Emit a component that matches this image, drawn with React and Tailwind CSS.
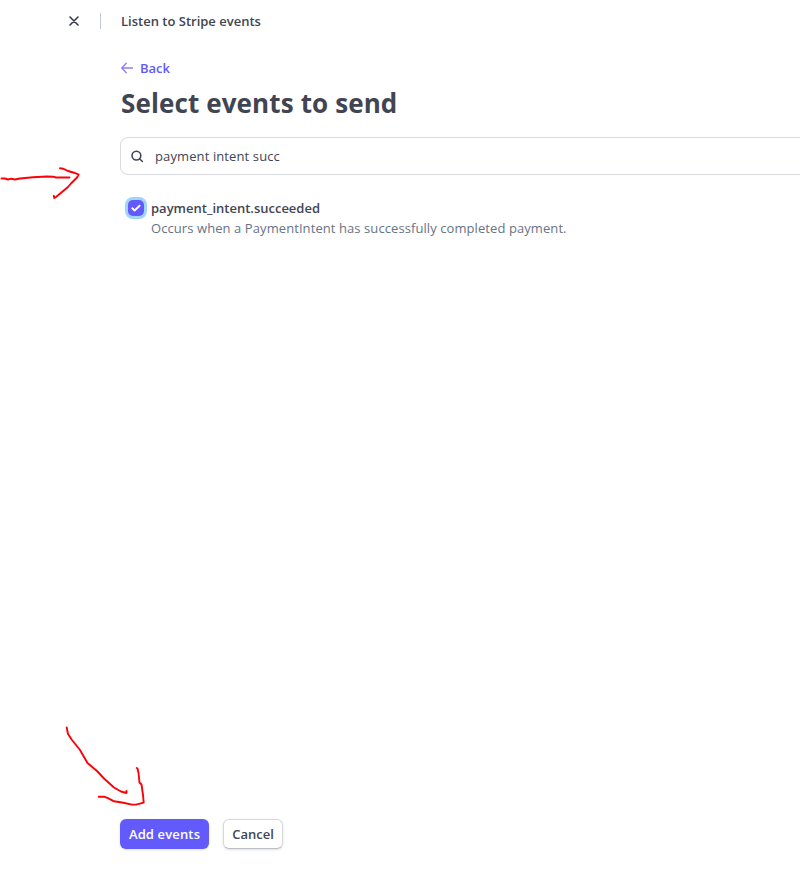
export default function App() {
  return (
    <div className="relative flex h-[890px] w-[800px] flex-col overflow-hidden bg-white font-['Open_Sans','Noto_Sans',sans-serif] text-[#414552]">
      <header className="flex h-[42px] shrink-0 items-center pl-[69px]">
        <svg className="h-[10px] w-[10px]" viewBox="0 0 10 10" fill="none" stroke="#353a48" strokeWidth="1.6" strokeLinecap="round">
          <path d="M1 1 9 9M9 1 1 9" />
        </svg>
        <div className="ml-[21px] h-4 w-px bg-[#c0c8d2]" />
        <h2 className="ml-5 whitespace-nowrap text-[13px] leading-5 font-semibold">Listen to Stripe events</h2>
      </header>

      <main className="flex grow flex-col pl-[120px]">
        <a className="mt-4 flex h-5 items-center text-[13px] leading-5 font-semibold text-[#625afa]">
          <svg className="ml-px h-3 w-3" viewBox="0 0 12 12" fill="none" stroke="#8d7ffa" strokeWidth="1.3" strokeLinecap="round" strokeLinejoin="round">
            <path d="M11.5 6H.8M5.3 1.3.7 6l4.6 4.7" />
          </svg>
          <span className="ml-[7px]">Back</span>
        </a>
        <h1 className="mt-[7px] ml-px h-9 whitespace-nowrap text-[26px] leading-9 font-bold tracking-[0.12px]">Select events to send</h1>

        <div className="mt-4 flex h-[38px] w-[700px] shrink-0 items-center rounded-lg border border-[#d8dadd] pl-[10px]">
          <svg className="h-[13px] w-[13px]" viewBox="0 0 13 13" fill="none" stroke="#414552" strokeWidth="1.6" strokeLinecap="round">
            <circle cx="5.4" cy="5.6" r="4.4" />
            <path d="m8.8 9 2.6 2.5" />
          </svg>
          <span className="ml-[11px] whitespace-nowrap text-[13px] leading-5 tracking-[0.11px]">payment intent succ</span>
        </div>

        <div className="mt-[23px] flex pl-2">
          <div className="mt-[2px] flex h-4 w-4 shrink-0 items-center justify-center rounded-[5px] bg-[#625afa] ring-[3px] ring-[#9fd5f8]">
            <svg className="h-[9px] w-[10px]" viewBox="0 0 10 9" fill="none" stroke="#fff" strokeWidth="1.9" strokeLinecap="round" strokeLinejoin="round">
              <path d="m1.3 4.3 2.3 2.2 5-4.8" />
            </svg>
          </div>
          <div className="ml-[7px] flex flex-col whitespace-nowrap text-[13px] leading-5">
            <span className="font-semibold">payment_intent.succeeded</span>
            <span className="tracking-[0.08px] text-[#687385]">Occurs when a PaymentIntent has successfully completed payment.</span>
          </div>
        </div>

        <footer className="mt-auto mb-[41px] flex gap-[14px] text-[13px] leading-5 font-semibold">
          <button className="h-[30px] w-[89px] rounded-md bg-[#625afa] tracking-[0.14px] whitespace-nowrap text-white shadow-sm">Add events</button>
          <button className="h-[30px] w-[60px] rounded-md border border-[#d5d8dd] border-b-[#bbbec4] whitespace-nowrap shadow-sm">Cancel</button>
        </footer>
      </main>

      <svg className="pointer-events-none absolute inset-0 h-[890px] w-[800px]" fill="none" stroke="#fb0207" strokeWidth="1.9" strokeLinecap="round" strokeLinejoin="round">
        <path d="M1.5 178.5 5 178.5 8 179.5 11 178.7 15 179.5 20 178.5 33 177.3 47 176.5 53 176.7 56 177.5 69.5 177.5" />
        <path d="M60 168.3 63 168.7 68 171 75 173 78.7 174.6 77 177.5 71 183.5 68 187 62 192 56 197 54.3 198 53.7 195.8" />
        <path d="M66.7 727.5 68 734 72 740 80 750 87.5 763 97 771 104 778.5 114 787.5 121 791.5 126.5 793 126.5 791" />
        <path d="M98.7 796.7 104 796.7 108 798.2 114 801.3 122 802.5 132 804.6 136 804.6 143.7 802.7 143 795 141.5 784.5 139.5 782.5 138.5 773 137.5 768.5 136.7 768" />
      </svg>
    </div>
  );
}
